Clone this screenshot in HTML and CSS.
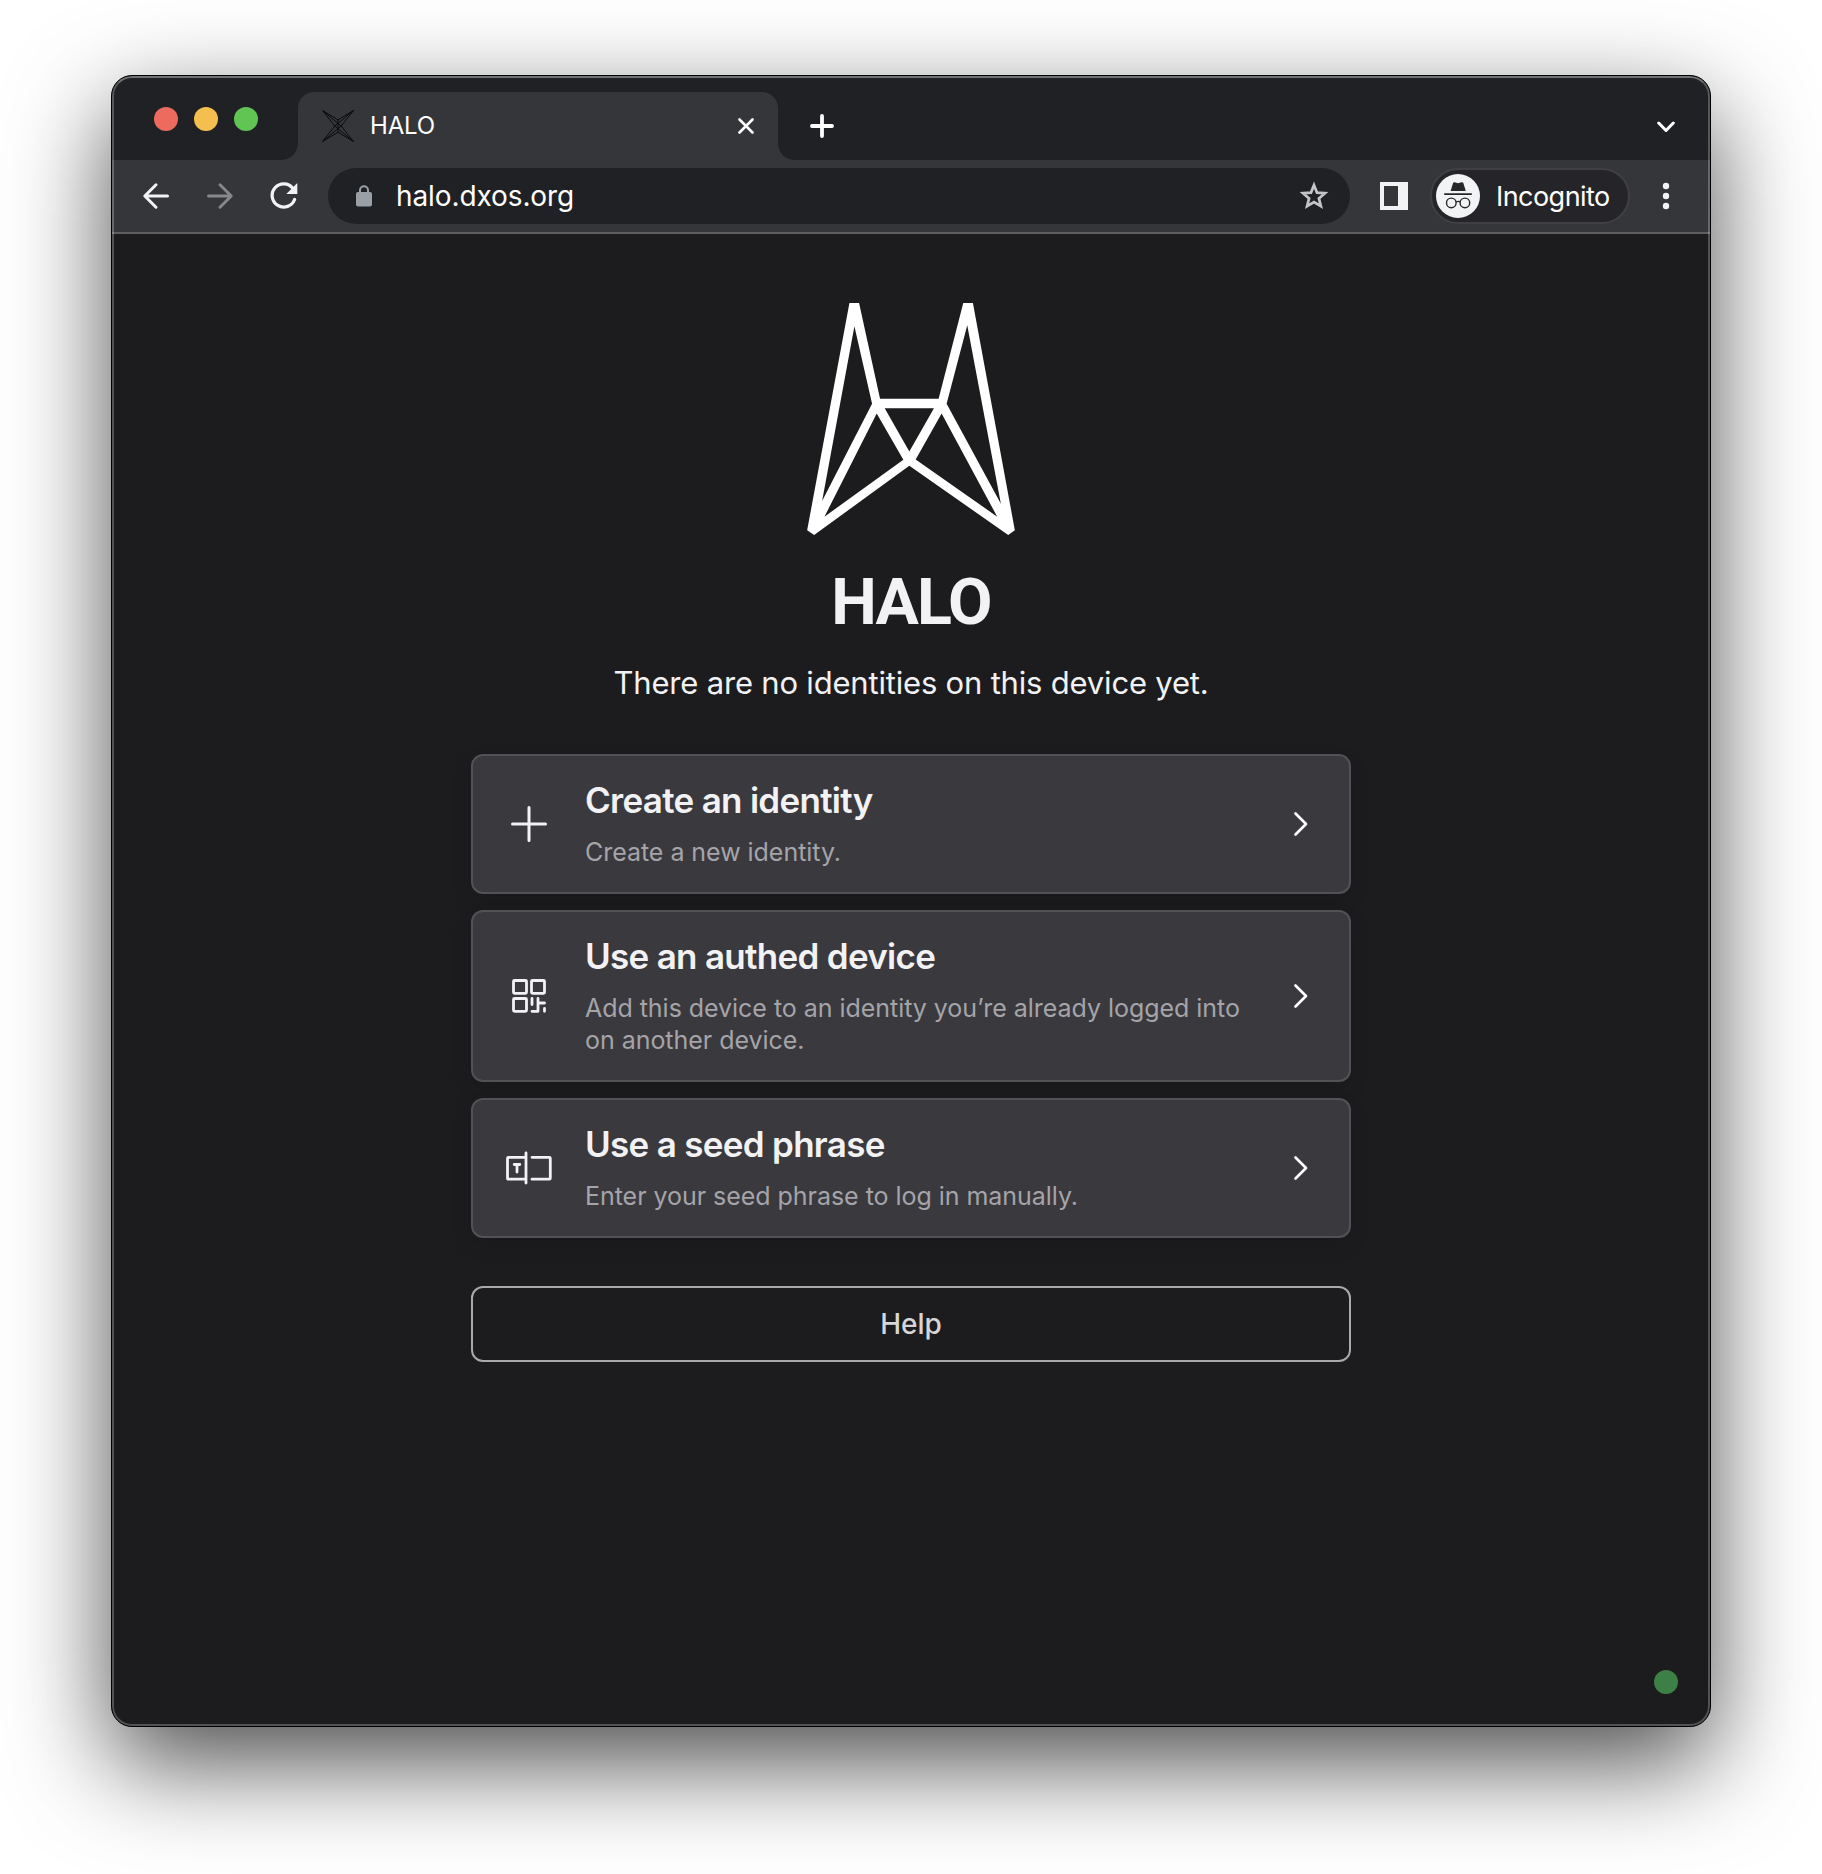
FILE: index.html
```html
<!DOCTYPE html>
<html lang="en">
<head>
<meta charset="utf-8">
<title>HALO</title>
<link rel="stylesheet" href="styles.css">
</head>
<body>
<div class="window">
  <header class="tabstrip">
    <div class="lights"><span class="light red"></span><span class="light yellow"></span><span class="light green"></span></div>
    <div class="tab">
      <svg class="favicon" viewBox="0 0 32 32" fill="none" stroke="#0b0b0c" stroke-width="1"><path d="M.5.5 16 9.800 31.500.5 19.200 16 31.500 31.500 16 22.300.5 31.500 12.800 16ZM.5.5 19.200 16 .5 31.500M31.500.5 12.800 16 31.500 31.500M16 9.800V22.300"/></svg>
      <span class="tab-title">HALO</span>
      <svg class="close" viewBox="0 0 16 16" fill="none" stroke="#fff" stroke-width="2.600" stroke-linecap="round"><path d="M1.500 1.500 14.500 14.500M14.500 1.500 1.500 14.500"/></svg>
    </div>
    <svg class="newtab" viewBox="0 0 24 24" fill="none" stroke="#fff" stroke-width="3.800" stroke-linecap="round"><path d="M12 2V22M2 12H22"/></svg>
    <svg class="tabsearch" viewBox="0 0 18 12" fill="none" stroke="#fff" stroke-width="3" stroke-linecap="round" stroke-linejoin="round"><path d="M1.700 2 9 9.500 16.300 2"/></svg>
  </header>
  <nav class="toolbar">
    <svg class="nav-icon" viewBox="0 0 28 28" fill="none" stroke="#f1f3f4" stroke-width="3" stroke-linecap="round" stroke-linejoin="round"><path d="M14 2.800 2.800 14 14 25.200M3.500 14H25.500"/></svg>
    <svg class="nav-icon" viewBox="0 0 28 28" fill="none" stroke="#86878a" stroke-width="3" stroke-linecap="round" stroke-linejoin="round"><path d="M14 2.800 25.200 14 14 25.200M24.500 14H2.500"/></svg>
    <svg class="nav-icon" viewBox="0 0 28 28" fill="none"><path d="M22.800 6.200A11.600 11.600 0 1 0 24.600 17.500" stroke="#f1f3f4" stroke-width="3.200" stroke-linecap="round"/><path d="M27.300 1V12H16.300Z" fill="#f1f3f4"/></svg>
    <div class="omnibox">
      <svg class="lock" viewBox="0 0 16 22"><path d="M4 8V5.200a4 4 0 0 1 8 0V8" fill="none" stroke="#9aa0a6" stroke-width="2"/><rect y="7" width="16" height="14.500" rx="2" fill="#9aa0a6"/></svg>
      <span class="url">halo.dxos.org</span>
      <svg class="star" viewBox="0 0 30 30" fill="none" stroke="#c4c5c8" stroke-width="2.700"><path d="M15 4.200 18 11.600 26 12.200 19.900 17.400 21.900 25.200 15 21 8.100 25.200 10.100 17.400 4 12.200 12 11.600Z"/></svg>
    </div>
    <svg class="panel" viewBox="0 0 28 28"><path fill="#f1f3f4" fill-rule="evenodd" d="M0 0H28V28H0ZM4 4V24H18V4Z"/></svg>
    <div class="profile">
      <svg class="spy" viewBox="0 0 44 44"><circle cx="22" cy="22" r="22" fill="#f1f3f4"/><path d="M14.600 17 17 9.300Q17.400 8 18.700 8.300L22 9.300 25.700 8.300Q27 8 27.400 9.300L29.800 17Z" fill="#27272a"/><path d="M8.200 20.100H35.800" stroke="#27272a" stroke-width="1.600"/><g fill="none" stroke="#27272a" stroke-width="1.400"><circle cx="15.300" cy="28.900" r="4.800"/><circle cx="28.900" cy="28.900" r="4.800"/><path d="M20 28Q22.100 26.800 24.200 28"/></g></svg>
      <span>Incognito</span>
    </div>
    <svg class="kebab" viewBox="0 0 8 28" fill="#f1f3f4"><circle cx="4" cy="4" r="3.200"/><circle cx="4" cy="14" r="3.200"/><circle cx="4" cy="24" r="3.200"/></svg>
  </nav>
  <main class="page">
    <svg class="logo" viewBox="81 69 624 697"><path fill="#fff" fill-rule="evenodd" d="M208 69H237L300 357H476L550 69H579L705 752 685 766 388 558 102 766 81 752ZM223 139 126 664 276 372ZM562 136 500 372 663 672ZM314 385 388 515 462 385ZM290 401 133 711 370 540ZM485 401 407 539 652 711Z"/></svg>
    <h1 class="brand">HALO</h1>
    <p class="lead">There are no identities on this device yet.</p>
    <div class="cards">
      <button class="card">
        <svg class="card-icon" viewBox="0 0 48 48" fill="none" stroke="#f2f2f4" stroke-width="3" stroke-linecap="round"><path d="M24 7.500V40.500M7.500 24H40.500"/></svg>
        <span class="card-text"><span class="card-title">Create an identity</span><span class="card-desc">Create a new identity.</span></span>
        <svg class="caret" viewBox="0 0 16 26" fill="none" stroke="#fff" stroke-width="2.700" stroke-linecap="round" stroke-linejoin="round"><path d="M2.500 2.500 13 13 2.500 23.500"/></svg>
      </button>
      <button class="card">
        <svg class="card-icon" viewBox="0 0 48 48" fill="none" stroke="#f2f2f4" stroke-width="2.800" stroke-linecap="round" stroke-linejoin="round"><rect x="8.500" y="8.500" width="13" height="12.800" rx="1"/><rect x="26.500" y="8.500" width="13" height="12.800" rx="1"/><rect x="8.500" y="26.500" width="13" height="12.800" rx="1"/><path d="M27 26.500V32.500M27 39.300H33V26.500M33 31H39.500M39.500 36.500V39.300"/></svg>
        <span class="card-text"><span class="card-title">Use an authed device</span><span class="card-desc">Add this device to an identity you’re already logged into on another device.</span></span>
        <svg class="caret" viewBox="0 0 16 26" fill="none" stroke="#fff" stroke-width="2.700" stroke-linecap="round" stroke-linejoin="round"><path d="M2.500 2.500 13 13 2.500 23.500"/></svg>
      </button>
      <button class="card">
        <svg class="card-icon" viewBox="0 0 48 48" fill="none" stroke="#f2f2f4" stroke-width="2.800" stroke-linecap="round" stroke-linejoin="round"><path d="M21 9V39M21 35.200H3.500Q2.500 35.200 2.500 34.200V14.300Q2.500 13.300 3.500 13.300H21M27 13.300H44.300Q45.300 13.300 45.300 14.300V34.200Q45.300 35.200 44.300 35.200H27M9.200 20.500H14.800M12 20.500V28"/></svg>
        <span class="card-text"><span class="card-title">Use a seed phrase</span><span class="card-desc">Enter your seed phrase to log in manually.</span></span>
        <svg class="caret" viewBox="0 0 16 26" fill="none" stroke="#fff" stroke-width="2.700" stroke-linecap="round" stroke-linejoin="round"><path d="M2.500 2.500 13 13 2.500 23.500"/></svg>
      </button>
    </div>
    <button class="help">Help</button>
    <span class="status"></span>
  </main>
</div>
</body>
</html>
```
FILE: styles.css
```css
* { box-sizing: border-box; }
body {
  margin: 0;
  padding: 75px 111px 147px;
  background: #fff;
  font-family: Inter, "Liberation Sans", sans-serif;
}
svg { display: block; flex: none; }
.window {
  position: relative;
  height: 1652px;
  display: flex;
  flex-direction: column;
  border: 1px solid #000;
  border-radius: 21px;
  overflow: hidden;
  background: #1c1c1e;
  box-shadow: 0 36px 100px rgba(0, 0, 0, .7);
}
/* light inner rim drawn over every pane */
.window::after {
  content: "";
  position: absolute;
  inset: 0;
  border: 2px solid rgba(255, 255, 255, .24);
  border-top-color: rgba(255, 255, 255, .36);
  border-radius: 20px;
  pointer-events: none;
}
.tabstrip {
  height: 84px;
  flex: none;
  display: flex;
  align-items: flex-end;
  padding-left: 42px;
  background: #202124;
}
.lights { display: flex; gap: 16px; width: 144px; margin-bottom: 29px; }
.light { width: 24px; height: 24px; border-radius: 50%; }
.red { background: #ed6a5e; }
.yellow { background: #f5bf4f; }
.green { background: #61c554; }
.tab {
  position: relative;
  width: 480px;
  height: 68px;
  display: flex;
  align-items: center;
  padding: 0 24px;
  border-radius: 16px 16px 0 0;
  background: #35363a;
  color: #fff;
}
.tab::before, .tab::after {
  content: "";
  position: absolute;
  bottom: 0;
  width: 16px;
  height: 16px;
}
.tab::before { left: -16px; background: radial-gradient(circle at 0 0, transparent 15.5px, #35363a 16px); }
.tab::after { right: -16px; background: radial-gradient(circle at 100% 0, transparent 15.5px, #35363a 16px); }
.favicon { width: 32px; height: 32px; }
.tab-title { flex: 1; margin-left: 16px; padding-bottom: 2px; font-size: 24px; letter-spacing: -.2px; }
.close { width: 16px; height: 16px; }
.newtab { width: 24px; height: 24px; margin: 0 0 22px 32px; }
.tabsearch { width: 18px; height: 12px; margin: 0 35px 27px auto; }
.toolbar {
  height: 74px;
  flex: none;
  display: flex;
  align-items: center;
  padding-left: 30px;
  background: #35363a;
  border-bottom: 2px solid #5d5e62;
}
.nav-icon { width: 28px; height: 28px; margin-right: 36px; }
.omnibox {
  width: 1022px;
  height: 56px;
  margin-left: -6px;
  display: flex;
  align-items: center;
  padding: 0 21px 0 28px;
  border-radius: 28px;
  background: #202124;
}
.lock { width: 16px; height: 22px; }
.url { flex: 1; margin-left: 24px; color: #fff; font-size: 28px; letter-spacing: -.1px; }
.star { width: 30px; height: 30px; }
.panel { width: 28px; height: 28px; margin-left: 30px; }
.profile {
  width: 200px;
  height: 56px;
  margin-left: 22px;
  display: flex;
  align-items: center;
  gap: 16px;
  padding-left: 4px;
  border: 2px solid #3f4044;
  border-radius: 28px;
  background: #252529;
  color: #fff;
  font-size: 27px;
  letter-spacing: -.55px;
}
.spy { width: 44px; height: 44px; }
.kebab { width: 8px; height: 28px; margin-left: 32px; }
.page {
  position: relative;
  flex: 1;
  display: flex;
  flex-direction: column;
  align-items: center;
  padding-top: 69px;
  color: #f2f2f4;
}
.logo { width: 208px; height: 232px; }
.brand {
  margin: 37px 0 0;
  font: 700 64.500px/60px Roboto, sans-serif;
  letter-spacing: -1.800px;
}
.lead { margin: 31px 0 0; font-size: 31px; line-height: 40px; letter-spacing: -.19px; }
.cards { width: 880px; margin-top: 51px; display: flex; flex-direction: column; gap: 16px; }
.card {
  display: flex;
  align-items: center;
  padding: 24px 40px 24px 32px;
  border: 2px solid #525256;
  border-radius: 12px;
  background: #3a393e;
  box-shadow: 0 8px 20px rgba(0, 0, 0, .1);
  color: inherit;
  font: inherit;
  text-align: left;
}
.card-icon { width: 48px; height: 48px; }
.card-text { flex: 1; margin-left: 32px; margin-right: 46px; display: flex; flex-direction: column; gap: 16px; }
.card-title { font-size: 35px; line-height: 40px; font-weight: 600; letter-spacing: -.7px; }
.card-desc { font-size: 25px; line-height: 32px; letter-spacing: -.04px; color: #a5a4a9; }
.caret { width: 16px; height: 26px; }
.help {
  width: 880px;
  height: 76px;
  margin-top: 48px;
  border: 2px solid #a9a9ac;
  border-radius: 12px;
  background: transparent;
  color: #d6d6d9;
  font: 500 28px/40px Inter, sans-serif;
}
.status {
  position: absolute;
  right: 32px;
  bottom: 32px;
  width: 24px;
  height: 24px;
  border-radius: 50%;
  background: #3d8045;
}
```
